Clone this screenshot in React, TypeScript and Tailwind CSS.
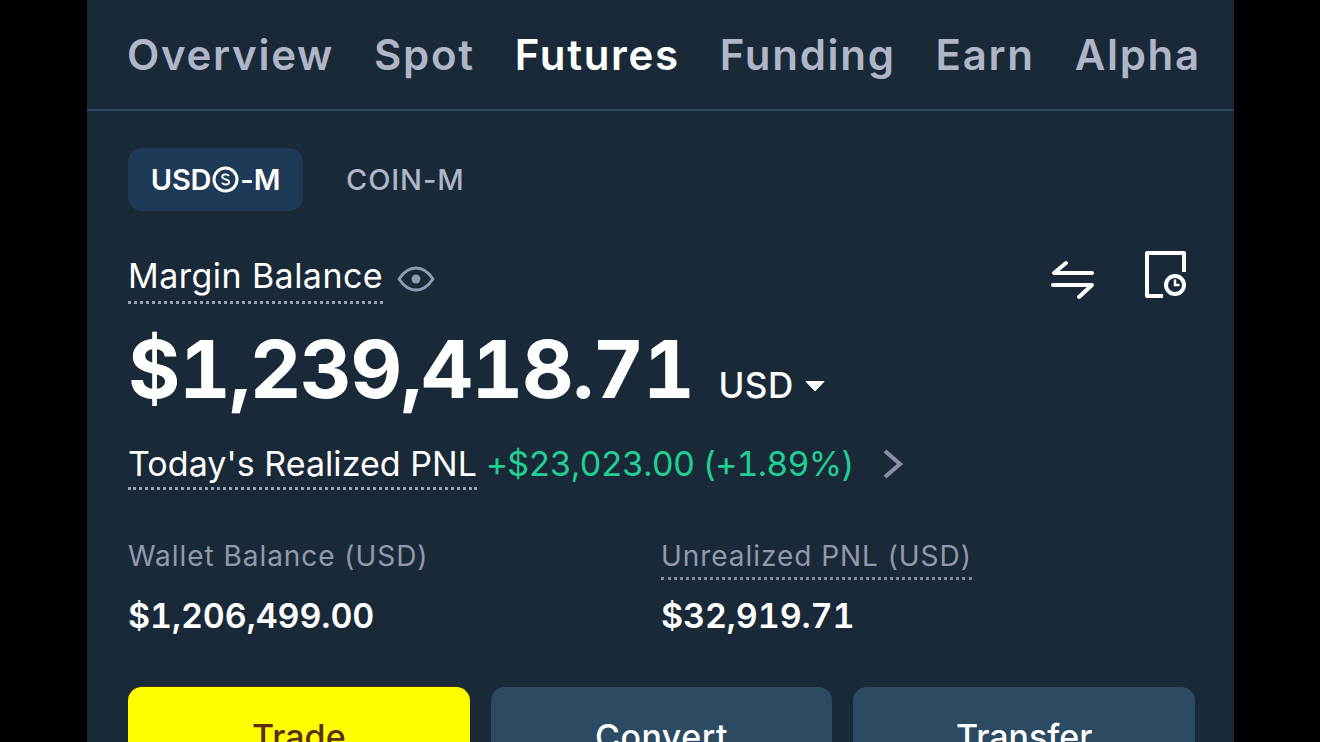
import React from 'react';

const tabs = ['Overview', 'Spot', 'Futures', 'Funding', 'Earn', 'Alpha'];

const App: React.FC = () => {
  return (
    <div className="h-[742px] w-[1320px] overflow-hidden bg-black font-['Inter',sans-serif]">
      <div className="ml-[87px] h-[742px] w-[1147px] bg-[#1a2938]">
        <div className="flex h-[111px] items-center gap-[40px] border-b-2 border-[#2a4661] pl-[40px]">
          {tabs.map((t) => (
            <span
              key={t}
              className={`text-[42px] leading-none font-semibold tracking-[1.7px] ${t === 'Futures' ? 'text-white' : 'text-[#b0b5c8]'}`}
            >
              {t}
            </span>
          ))}
        </div>

        <div className="px-[41px]">
          <div className="mt-[37px] flex items-center gap-[43px]">
            <div className="flex h-[63px] w-[175px] items-center justify-center rounded-[14px] bg-[#1f3a57] text-[29px] font-semibold tracking-[-0.2px] text-white">
              USD
              <svg className="mx-[1px]" width="27" height="27" viewBox="0 0 27 27" fill="none" stroke="currentColor">
                <circle cx="13.5" cy="13.5" r="11.5" strokeWidth="3" />
                <path d="M17 10c-.8-1.2-2-1.7-3.5-1.7-2 0-3.3 1-3.3 2.5 0 3.4 7 1.7 7 5.2 0 1.5-1.500 2.500-3.600 2.500-1.600 0-3-.6-3.800-1.900" strokeWidth="1.800" />
              </svg>
              -M
            </div>
            <span className="text-[29px] font-medium tracking-[0.9px] text-[#b0b5c8]">COIN-M</span>
          </div>

          <div className="mt-[37px] flex h-[62px] items-start justify-between">
            <div className="flex items-center gap-[14px]">
              <span className="border-b-[3px] border-dotted border-[#9aa3b8] pt-[3px] text-[34px] leading-[50px] tracking-[0.45px] text-white">
                Margin Balance
              </span>
              <svg className="mt-[6px]" width="38" height="26" viewBox="0 0 38 26" fill="none" stroke="#8d9bb3" strokeWidth="3">
                <path d="M2 13C7 5.500 12.500 2 19 2s12 3.500 17 11c-5 7.500-10.500 11-17 11S7 20.500 2 13Z" strokeLinejoin="round" />
                <circle cx="19" cy="13" r="4.500" fill="#8d9bb3" stroke="none" />
              </svg>
            </div>
            <div className="flex items-center gap-[50px]">
              <svg className="mt-[9px]" width="44" height="42" viewBox="0 0 44 42" fill="none" stroke="white" strokeWidth="4" strokeLinecap="round" strokeLinejoin="round">
                <path d="M15 5 3 15h38" />
                <path d="M2 27h39L28 39" />
              </svg>
              <svg className="mr-[2px] mt-[3px]" width="46" height="50" viewBox="0 0 46 50" fill="none" stroke="white" strokeLinecap="round">
                <path d="M18 45H2V2h37v19" strokeWidth="4" strokeLinecap="butt" strokeLinejoin="round" />
                <circle cx="30" cy="34" r="9" strokeWidth="4" />
                <path d="M30 29.500v4.500h3.500" strokeWidth="2.500" />
              </svg>
            </div>
          </div>

          <div className="mt-[7px] flex items-baseline">
            <span className="text-[80px] leading-[104px] font-bold tracking-[-1.3px] text-white tabular-nums">$1,239,418.71</span>
            <span className="ml-[25px] text-[35px] font-medium tracking-[0.5px] text-white">USD</span>
            <svg className="ml-[11px] self-center mt-[34px]" width="20" height="12" viewBox="0 0 20 12" fill="white">
              <path d="M1 1.500h18L10 11Z" stroke="white" strokeWidth="1" strokeLinejoin="round" />
            </svg>
          </div>

          <div className="mt-[20px] flex items-center">
            <span className="border-b-[3px] border-dotted border-[#9aa3b8] pb-[1px] text-[34px] leading-[45px] tracking-[0.05px] text-white">
              Today's Realized PNL
            </span>
            <span className="ml-[9px] mb-[4px] text-[34px] leading-[45px] tracking-[-0.75px] text-[#20cf92] tabular-nums">+$23,023.00 (+1.89%)</span>
            <svg className="ml-[28px] mb-[4px]" width="22" height="32" viewBox="0 0 22 32" fill="none" stroke="#8a90a8" strokeWidth="4">
              <path d="m3 3 15 13L3 29" />
            </svg>
          </div>

          <div className="mt-[47px] grid grid-cols-[533px_1fr]">
            <div>
              <div className="h-[42px] text-[28px] leading-[38px] tracking-[0.95px] text-[#9299ae]">Wallet Balance (USD)</div>
              <div className="mt-[15px] text-[34px] leading-[44px] font-semibold tracking-[-0.1px] text-white tabular-nums">$1,206,499.00</div>
            </div>
            <div>
              <div className="inline-block h-[43px] border-b-[3px] border-dotted border-[#858ca1] text-[28px] leading-[38px] tracking-[0.95px] text-[#9299ae]">
                Unrealized PNL (USD)
              </div>
              <div className="mt-[14px] text-[34px] leading-[44px] font-semibold tracking-[-0.1px] text-white tabular-nums">$32,919.71</div>
            </div>
          </div>

          <div className="mt-[49px] grid w-[1067px] grid-cols-3 gap-[21px]">
            <div className="flex h-[100px] justify-center rounded-[14px] bg-[#ffff00] pt-[28px] text-[34px] leading-[44px] font-medium text-[#5b2d12] shadow-[0_-1px_0_#3d3208]">Trade</div>
            <div className="flex h-[100px] justify-center rounded-[14px] bg-[#2c4b63] pt-[28px] text-[34px] leading-[44px] font-medium tracking-[0.5px] text-white">Convert</div>
            <div className="flex h-[100px] justify-center rounded-[14px] bg-[#2c4b63] pt-[28px] text-[34px] leading-[44px] font-medium text-white">Transfer</div>
          </div>
        </div>
      </div>
    </div>
  );
};

export default App;
